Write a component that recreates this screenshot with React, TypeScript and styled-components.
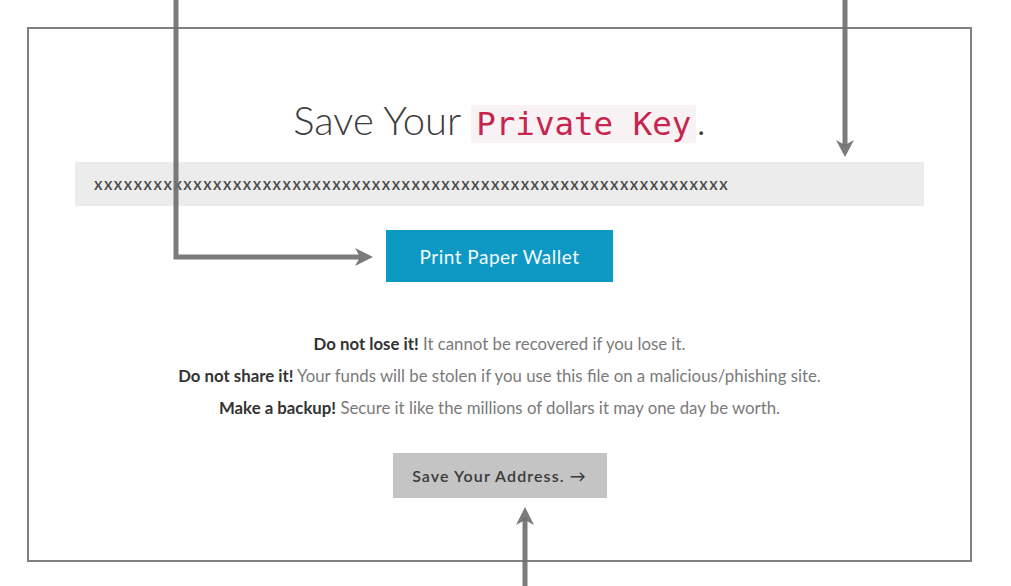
import styled, { createGlobalStyle } from "styled-components";

const Global = createGlobalStyle`
  html, body {
    margin: 0;
    padding: 0;
    background: #ffffff;
  }
  body {
    font-family: Lato, "Open Sans", sans-serif;
  }
`;

const Page = styled.div`
  position: relative;
  width: 1011px;
  height: 586px;
  padding: 27px 0 0 27px;
  box-sizing: border-box;
  overflow: hidden;
`;

const Frame = styled.div`
  width: 945px;
  height: 535px;
  box-sizing: border-box;
  border: 2px solid #808080;
  display: flex;
  flex-direction: column;
  align-items: center;
  padding: 69px 46px 0;
`;

const Title = styled.h1`
  margin: 0;
  font-family: Lato, sans-serif;
  font-weight: 300;
  font-size: 40px;
  line-height: 44px;
  color: #3d3d3d;
`;

const Code = styled.code`
  font-family: "DejaVu Sans Mono", "Liberation Mono", monospace;
  font-size: 32.5px;
  color: #c7254e;
  background: #f9f2f4;
  padding: 0 5px;
  border-radius: 2px;
`;

const KeyBar = styled.div`
  margin-top: 16px;
  align-self: stretch;
  height: 44px;
  background: #ececec;
  display: flex;
  align-items: center;
  padding: 0 19px;
  font-family: Lato, sans-serif;
  font-size: 16.5px;
  font-weight: 600;
  letter-spacing: 1.5px;
  color: #4a4a4a;
`;

const Button = styled.button<{ $tone: "blue" | "grey" }>`
  border: none;
  font-family: Lato, sans-serif;
  cursor: pointer;
  ${({ $tone }) =>
    $tone === "blue"
      ? `
    margin-top: 24px;
    width: 227px;
    height: 52px;
    background: #0e99c5;
    color: #f4fbfd;
    font-size: 19px;
    font-weight: 400;
    letter-spacing: 0.5px;
  `
      : `
    margin-top: 29px;
    width: 214px;
    height: 45px;
    background: #c4c4c4;
    color: #3a3a3a;
    font-size: 16px;
    font-weight: 600;
    letter-spacing: 1.1px;
  `}
`;

const Notes = styled.div`
  margin-top: 46px;
  display: flex;
  flex-direction: column;
  align-items: center;
  font-size: 16.8px;
  line-height: 32px;
  color: #7a7a7a;
`;

const Strong = styled.strong`
  color: #333;
  font-weight: 700;
`;

const Overlay = styled.svg`
  position: absolute;
  left: 0;
  top: 0;
  pointer-events: none;
`;

const ARROW = "#707070";

function Arrows() {
  return (
    <Overlay width={1011} height={586} viewBox="0 0 1011 586">
      <g stroke={ARROW} strokeWidth={5} fill="none" opacity={0.92}>
        <polyline points="176,0 176,257 360,257" />
        <line x1={845} y1={0} x2={845} y2={146} />
        <line x1={525} y1={586} x2={525} y2={518} />
      </g>
      <g fill={ARROW} opacity={0.92}>
        <polygon points="373,257 355,248 360,257 355,266" />
        <polygon points="845,157 836,140 845,145 854,140" />
        <polygon points="525,507 516,525 525,520 534,525" />
      </g>
    </Overlay>
  );
}

export default function App() {
  return (
    <Page>
      <Global />
      <Frame>
        <Title>
          Save Your <Code>Private Key</Code>.
        </Title>
        <KeyBar>{"x".repeat(64)}</KeyBar>
        <Button $tone="blue">Print Paper Wallet</Button>
        <Notes>
          <div>
            <Strong>Do not lose it!</Strong> It cannot be recovered if you lose it.
          </div>
          <div>
            <Strong>Do not share it!</Strong> Your funds will be stolen if you use this file on a
            malicious/phishing site.
          </div>
          <div>
            <Strong>Make a backup!</Strong> Secure it like the millions of dollars it may one day be
            worth.
          </div>
        </Notes>
        <Button $tone="grey">Save Your Address. &rarr;</Button>
      </Frame>
      <Arrows />
    </Page>
  );
}
